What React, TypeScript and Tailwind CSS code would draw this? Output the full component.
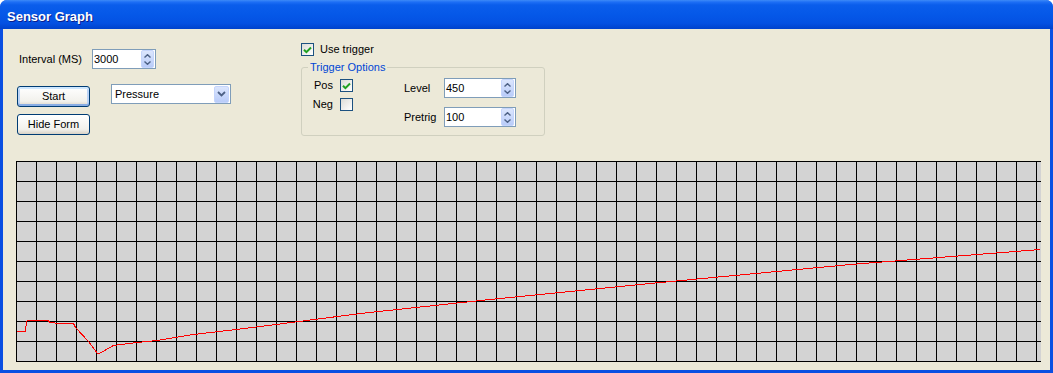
import React from "react";

const sans = "font-['Liberation_Sans',Arial,sans-serif]";

const trace: [number, number][] = [
  [16, 331], [25, 331], [26, 321], [27, 320], [48, 320], [49, 322], [54, 322], [55, 323],
  [73, 323], [75, 327], [88, 341], [97, 353], [99, 353], [113, 345], [137, 342], [157, 340],
  [193, 334], [227, 330], [260, 326], [360, 313], [480, 300], [660, 282], [850, 264], [1040, 249],
];

function Arrow({ up }: { up?: boolean }) {
  return (
    <svg width="7" height="4" viewBox="0 0 7 4">
      <path
        d={up ? "M0.5 3.5 L3.5 0.7 L6.5 3.5" : "M0.5 0.5 L3.5 3.3 L6.5 0.5"}
        fill="none"
        stroke="#4D6185"
        strokeWidth="1.4"
      />
    </svg>
  );
}

function SpinBox({ value, className }: { value: string; className: string }) {
  return (
    <div className={`flex h-[20px] items-center border border-[#7F9DB9] bg-white pr-[1px] ${className}`}>
      <span className="flex-1 pl-[1px] text-[11px] leading-none text-black">{value}</span>
      <div className="flex h-[18px] w-[13px] flex-col items-center justify-center gap-[3px] rounded-[2px] border border-[#C5D5FC] bg-[linear-gradient(#DCE6FD,#B9CCF9)]">
        <Arrow up />
        <Arrow />
      </div>
    </div>
  );
}

function Check({ checked }: { checked?: boolean }) {
  return (
    <span className="flex h-[13px] w-[13px] shrink-0 items-center justify-center border border-[#1C5180] bg-[linear-gradient(135deg,#DCDCD7,#FFFFFF)]">
      {checked && (
        <svg width="9" height="8" viewBox="0 0 9 8">
          <path d="M1 3.8 L3.4 6.2 L8 1.5" fill="none" stroke="#21A121" strokeWidth="2" />
        </svg>
      )}
    </span>
  );
}

function XpButton({ label, primary }: { label: string; primary?: boolean }) {
  return (
    <button
      className={`h-[21px] w-[73px] rounded-[3px] border border-[#003C74] bg-[linear-gradient(#FFFFFF,#F2F1EC_75%,#D8D2C6)] text-[11px] leading-none text-black ${
        primary
          ? "shadow-[inset_0_2px_0_#CEE7FF,inset_0_-2px_0_#89ADE4,inset_2px_0_0_#BCD4F6,inset_-2px_0_0_#BCD4F6]"
          : ""
      }`}
    >
      {label}
    </button>
  );
}

function Graph() {
  const cols = Array.from({ length: 52 }, (_, i) => i * 20 + 0.5);
  const rows = Array.from({ length: 11 }, (_, i) => i * 20 + 0.5);
  const pts = trace.map(([x, y]) => `${x - 16 + 0.5},${y - 161 + 0.5}`).join(" ");
  return (
    <svg width="1025" height="201" className="ml-[13px] block bg-[#D3D3D3]">
      {cols.map((x) => (
        <line key={`c${x}`} x1={x} y1={0} x2={x} y2={201} stroke="#000" strokeWidth="1" shapeRendering="crispEdges" />
      ))}
      {rows.map((y) => (
        <line key={`r${y}`} x1={0} y1={y} x2={1025} y2={y} stroke="#000" strokeWidth="1" shapeRendering="crispEdges" />
      ))}
      <polyline points={pts} fill="none" stroke="#FF0000" strokeWidth="1" shapeRendering="crispEdges" />
    </svg>
  );
}

export default function App() {
  return (
    <div className={`flex h-[373px] w-[1053px] flex-col overflow-hidden rounded-t-[7px] bg-[#0A4FE2] ${sans}`}>
      {/* title bar */}
      <div className="flex h-[29px] shrink-0 items-center bg-[linear-gradient(180deg,#3D8AF7_0px,#1E6FF5_2px,#0A5DEB_5px,#0558E8_50%,#0451E2_80%,#0042CC_100%)] pl-[7px] pt-[4px]">
        <span className="text-[13px] font-bold text-white [text-shadow:1px_1px_0_#0A1E8C]">Sensor Graph</span>
      </div>

      {/* client area */}
      <div className="mx-[3px] mb-[3px] flex flex-1 flex-col bg-[#ECE9D8] text-[11px] text-black">
        <div className="flex h-[132px] shrink-0">
          {/* left controls */}
          <div className="flex w-[228px] shrink-0 flex-col pl-[14px]">
            <div className="mt-[20px] flex items-center">
              <span className="w-[75px] pl-[2px]">Interval (MS)</span>
              <SpinBox value="3000" className="w-[64px]" />
            </div>
            <div className="mt-[15px] flex items-start">
              <div className="mt-[2px]">
                <XpButton label="Start" primary />
              </div>
              <div className="ml-[21px] flex h-[20px] w-[120px] items-center border border-[#7F9DB9] bg-white pr-[1px]">
                <span className="flex-1 pl-[3px] leading-none">Pressure</span>
                <div className="flex h-[17px] w-[15px] items-center justify-center rounded-[2px] border border-[#C5D5FC] bg-[linear-gradient(#DCE6FD,#B9CCF9)]">
                  <svg width="9" height="6" viewBox="0 0 9 6">
                    <path d="M1 1 L4.5 4.5 L8 1" fill="none" stroke="#4D6185" strokeWidth="1.8" />
                  </svg>
                </div>
              </div>
            </div>
            <div className="mt-[7px]">
              <XpButton label="Hide Form" />
            </div>
          </div>

          {/* trigger controls */}
          <div className="ml-[70px] flex flex-col">
            <label className="mt-[14px] flex h-[13px] items-center gap-[6px]">
              <Check checked />
              <span>Use trigger</span>
            </label>
            <fieldset className="mt-[5px] w-[244px] rounded-[3px] border border-[#D0D0BF] px-[6px] pb-[8px] pt-[4px]">
              <legend className="px-[2px] leading-[13px] text-[#0046D5]">Trigger Options</legend>
              <div className="flex items-start">
                <div className="mt-[1px] flex flex-col">
                  <div className="flex h-[13px] items-center">
                    <span className="w-[25px] text-right">Pos</span>
                    <span className="ml-[7px]">
                      <Check checked />
                    </span>
                  </div>
                  <div className="mt-[6px] flex h-[13px] items-center">
                    <span className="w-[25px] text-right">Neg</span>
                    <span className="ml-[7px]">
                      <Check />
                    </span>
                  </div>
                </div>
                <div className="ml-[51px] flex flex-col">
                  <div className="flex items-center">
                    <span className="w-[40px]">Level</span>
                    <SpinBox value="450" className="w-[72px]" />
                  </div>
                  <div className="mt-[9px] flex items-center">
                    <span className="w-[40px]">Pretrig</span>
                    <SpinBox value="100" className="w-[72px]" />
                  </div>
                </div>
              </div>
            </fieldset>
          </div>
        </div>

        <Graph />
      </div>
    </div>
  );
}
